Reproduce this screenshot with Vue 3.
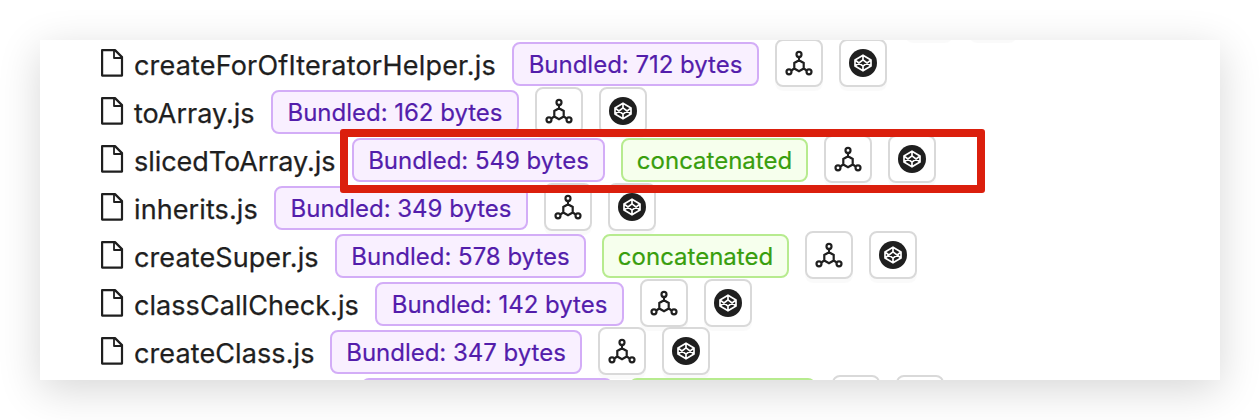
<script setup>
const rows = [
  { name: '', nameWidth: 302, size: 0, tagWidth: 250, concatenated: true, ls: 0 },
  { name: 'createForOfIteratorHelper.js', nameWidth: 378, size: 712, tagWidth: 247, ls: 0.18 },
  { name: 'toArray.js', nameWidth: 137, size: 162, tagWidth: 248, ls: 0 },
  { name: 'slicedToArray.js', nameWidth: 218, size: 549, tagWidth: 253, concatenated: true, ls: -0.06 },
  { name: 'inherits.js', nameWidth: 140, size: 349, tagWidth: 254, ls: 0.1 },
  { name: 'createSuper.js', nameWidth: 201, size: 578, tagWidth: 251, concatenated: true, ls: 0.1 },
  { name: 'classCallCheck.js', nameWidth: 241, size: 142, tagWidth: 249, ls: 0.06 },
  { name: 'createClass.js', nameWidth: 196, size: 347, tagWidth: 252, ls: 0.1 },
  { name: '', nameWidth: 227, size: 0, tagWidth: 252, concatenated: true, ls: 0 },
]
</script>

<template>
  <main class="page">
    <section class="panel">
      <div v-for="(row, i) in rows" :key="i" class="row">
        <svg class="file" viewBox="0 0 24 30">
          <path d="M2.1 2.1H15L22 9.1V27.6H2.1Z" />
          <path class="fold" d="M14 2.5V10H21.5" />
        </svg>
        <span class="name" :style="{ width: row.nameWidth + 'px', letterSpacing: row.ls + 'px' }">{{ row.name }}</span>
        <span class="tag purple" :style="{ width: row.tagWidth + 'px' }"><template v-if="row.name">Bundled: {{ row.size }} bytes</template></span>
        <span v-if="row.concatenated" class="tag green"><template v-if="row.name">concatenated</template></span>
        <button class="btn">
          <svg viewBox="0 0 44 44" class="nodes">
            <path d="M22 19.2L26.7 22V27.5L22 30.2L17.3 27.5V22ZM22 19.2V16M26.7 27.5L29.4 29.2M17.3 27.5L14.6 29.2" />
            <circle cx="22" cy="13.4" r="2.5" />
            <circle cx="12" cy="30.8" r="2.5" />
            <circle cx="32" cy="30.8" r="2.5" />
          </svg>
        </button>
        <button class="btn">
          <svg viewBox="0 0 44 44" class="pen">
            <circle cx="22" cy="22" r="14" />
            <path d="M22 14.2L30 19V25L22 29.8L14 25V19ZM22 14.2V18.8M22 29.8V25.2M14 19L22 25.2L30 19M14 25L22 18.8L30 25" />
          </svg>
        </button>
      </div>
    </section>
    <div class="marker"></div>
  </main>
</template>

<style>
body { margin: 0; background: #fff; }
</style>

<style scoped>
.page {
  position: relative;
  box-sizing: border-box;
  width: 1260px;
  height: 420px;
  padding: 40px;
  overflow: hidden;
  background: #fff;
  font-family: Inter, "Noto Sans", sans-serif;
}
.panel {
  height: 340px;
  overflow: hidden;
  background: #fff;
  box-shadow: 0 10px 40px rgba(0, 0, 0, 0.16);
}
.row {
  display: flex;
  align-items: flex-start;
  height: 48px;
  padding-left: 60px;
}
.row:first-child { margin-top: -48px; }
.file {
  flex: none;
  width: 24px;
  height: 30px;
  margin-top: 8px;
  fill: none;
  stroke: #1f1f1f;
  stroke-width: 2.2;
  stroke-linejoin: round;
}
.fold { stroke-width: 1.8; }
.name {
  flex: none;
  margin-left: 10px;
  color: #1f1f1f;
  font-size: 27px;
  line-height: 52px;
  white-space: nowrap;
  -webkit-text-stroke: 0.25px #1f1f1f;
}
.tag {
  box-sizing: border-box;
  flex: none;
  height: 44px;
  margin-top: 2px;
  margin-right: 16px;
  border: 2px solid;
  border-radius: 8px;
  font-size: 24px;
  line-height: 41px;
  text-align: center;
  white-space: nowrap;
  -webkit-text-stroke: 0.2px currentColor;
}
.purple { color: #531dab; background: #f9f0ff; border-color: #d3adf7; letter-spacing: -0.02px; }
.green { width: 187px; color: #389e0d; background: #f6ffed; border-color: #b7eb8f; }
.btn {
  box-sizing: border-box;
  flex: none;
  width: 48px;
  height: 48px;
  margin: -1px 16px 0 0;
  padding: 0;
  border: 2px solid #d9d9d9;
  border-radius: 8px;
  background: #fff;
  box-shadow: 0 4px 0 rgba(0, 0, 0, 0.02);
}
.btn svg { display: block; width: 44px; height: 44px; }
.nodes { fill: none; stroke: #1f1f1f; stroke-width: 2.2; }
.pen circle { fill: #1f1f1f; }
.pen path { fill: none; stroke: #fff; stroke-width: 1.7; stroke-linejoin: round; }
.marker {
  position: absolute;
  left: 340px;
  top: 129px;
  box-sizing: border-box;
  width: 645px;
  height: 64px;
  border: 8px solid #db1f0d;
  border-radius: 3px;
}
</style>
